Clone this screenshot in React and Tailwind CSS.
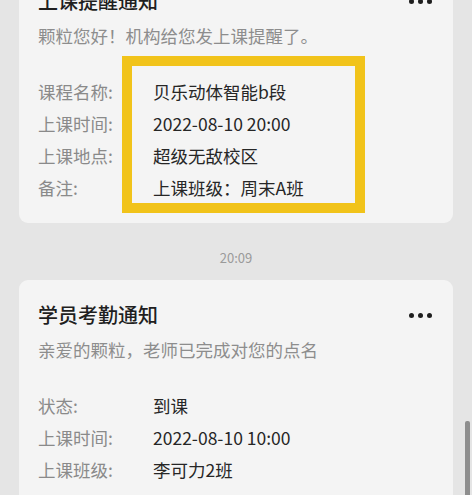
import React from 'react';

const FONT = { fontFamily: '"Noto Sans CJK SC", "Noto Sans", Roboto, sans-serif' };

const reminderRows = [
  ['课程名称:', '贝乐动体智能b段'],
  ['上课时间:', '2022-08-10 20:00'],
  ['上课地点:', '超级无敌校区'],
  ['备注:', '上课班级：周末A班'],
];

const attendanceRows = [
  ['状态:', '到课'],
  ['上课时间:', '2022-08-10 10:00'],
  ['上课班级:', '李可力2班'],
];

function MoreDots() {
  return (
    <div className="flex items-center gap-[4px]">
      <span className="h-[5px] w-[5px] rounded-full bg-[#1e1e1e]" />
      <span className="h-[5px] w-[5px] rounded-full bg-[#1e1e1e]" />
      <span className="h-[5px] w-[5px] rounded-full bg-[#1e1e1e]" />
    </div>
  );
}

function NoticeCard({ title, subtitle, rows, className = '', children }) {
  return (
    <div className={`relative rounded-[9px] bg-[#f4f4f4] pl-[19px] pr-[21px] pt-[21px] pb-[19px] ${className}`}>
      <div className="flex items-center justify-between">
        <h3 className="text-[20px] leading-[28px] font-medium text-[#1f1f1f]">{title}</h3>
        <MoreDots />
      </div>
      <p className="mt-[9px] text-[17.5px] leading-[24px] text-[#8d8d8d]">{subtitle}</p>
      <div className="mt-[28px] flex flex-col">
        {rows.map(([label, value]) => (
          <div key={label} className="flex text-[17.5px] leading-[32px]">
            <span className="w-[115px] shrink-0 text-[#8a8a8a]">{label}</span>
            <span className="text-[#262626]">{value}</span>
          </div>
        ))}
      </div>
      {children}
    </div>
  );
}

export default function App() {
  return (
    <div className="relative h-[495px] w-[472px] overflow-hidden bg-[#e5e5e5] px-[19px]" style={FONT}>
      <NoticeCard
        className="mt-[-34px]"
        title="上课提醒通知"
        subtitle="颗粒您好！机构给您发上课提醒了。"
        rows={reminderRows}
      >
        <div className="absolute left-[103px] top-[90px] h-[157px] w-[243px] border-[10px] border-[#f1c31a]" />
      </NoticeCard>

      <div className="mt-[25px] mb-[12px] text-center text-[13px] leading-[20px] text-[#9a9a9a]">20:09</div>

      <NoticeCard
        title="学员考勤通知"
        subtitle="亲爱的颗粒，老师已完成对您的点名"
        rows={attendanceRows}
      />

      <div className="absolute right-[2px] top-[421px] h-[80px] w-[5px] rounded-[2px] bg-[#8e8e8e]" />
    </div>
  );
}
